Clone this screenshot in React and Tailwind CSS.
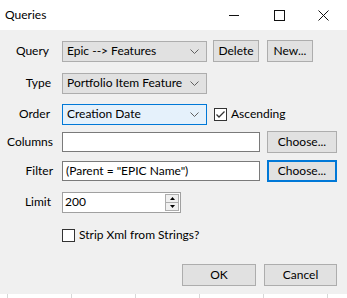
import { useState } from 'react';

const FONT = { fontFamily: 'Lato, "Noto Sans", sans-serif' };

function Chevron() {
    return (
        <svg width="9" height="5" viewBox="0 0 9 5" className="shrink-0">
            <path d="M0.5 0.5 L4.5 4.5 L8.5 0.5" fill="none" stroke="#606060" strokeWidth="1" />
        </svg>
    );
}

function Combo({ value, focused }) {
    return (
        <div
            className={`flex items-center justify-between w-[145px] h-[21px] pl-[4px] pr-[7px] border ${
                focused ? 'border-[#0078d7] bg-[#e5f1fb]' : 'border-[#adadad] bg-[#e1e1e1]'
            }`}
        >
            <span className="whitespace-nowrap">{value}</span>
            <Chevron />
        </div>
    );
}

function Btn({ children, className = '', focused }) {
    return (
        <div
            className={`flex items-center justify-center h-[22px] bg-[#e1e1e1] ${
                focused ? 'border-2 border-[#0078d7]' : 'border border-[#adadad]'
            } ${className}`}
        >
            {children}
        </div>
    );
}

function Label({ children, className = '' }) {
    return <div className={`w-[53px] text-right shrink-0 whitespace-nowrap ${className}`}>{children}</div>;
}

function Check({ checked }) {
    return (
        <div className="w-[13px] h-[13px] border border-[#333333] bg-white flex items-center justify-center shrink-0">
            {checked && (
                <svg width="11" height="11" viewBox="0 0 11 11">
                    <path d="M1.5 5.5 L4 8 L9.5 2.5" fill="none" stroke="#333333" strokeWidth="1.3" />
                </svg>
            )}
        </div>
    );
}

export default function App() {
    const [ascending] = useState(true);

    return (
        <div className="w-[347px] h-[298px] bg-[#f0f0f0] text-[12px] text-black flex flex-col overflow-hidden" style={FONT}>
            {/* title bar */}
            <div className="h-[30px] bg-white flex items-center shrink-0">
                <span className="pl-[5px] flex-1">Queries</span>
                <svg width="10" height="10" viewBox="0 0 10 10" className="mr-[35px]">
                    <path d="M0 5.5 H10" stroke="#111" strokeWidth="1" />
                </svg>
                <svg width="11" height="11" viewBox="0 0 11 11" className="mr-[33px]">
                    <rect x="0.5" y="0.5" width="10" height="10" fill="none" stroke="#111" strokeWidth="1" />
                </svg>
                <svg width="11" height="11" viewBox="0 0 11 11" className="mr-[18px]">
                    <path d="M0.5 0.5 L10.5 10.5 M10.5 0.5 L0.5 10.5" stroke="#111" strokeWidth="1" />
                </svg>
            </div>

            <div className="flex flex-col">
                <div className="flex items-center h-[22px] mt-[10px]">
                    <Label className="pr-[4px]">Query</Label>
                    <div className="ml-[9px]"><Combo value="Epic --> Features" /></div>
                    <Btn className="ml-[6px] w-[46px]">Delete</Btn>
                    <Btn className="ml-[8px] w-[46px]">New...</Btn>
                </div>

                <div className="flex items-center h-[22px] mt-[10px]">
                    <Label className="pr-[2px]">Type</Label>
                    <div className="ml-[9px]"><Combo value="Portfolio Item Feature" /></div>
                </div>

                <div className="flex items-center h-[22px] mt-[9px]">
                    <Label className="pr-[3px]">Order</Label>
                    <div className="ml-[9px]"><Combo value="Creation Date" focused /></div>
                    <div className="ml-[7px]"><Check checked={ascending} /></div>
                    <span className="ml-[4px]">Ascending</span>
                </div>

                <div className="flex items-center h-[22px] mt-[6px]">
                    <Label>Columns</Label>
                    <div className="ml-[9px] w-[198px] h-[20px] bg-white border border-[#7a7a7a]" />
                    <Btn className="ml-[7px] w-[70px]">Choose...</Btn>
                </div>

                <div className="flex items-center h-[22px] mt-[7px]">
                    <Label>Filter</Label>
                    <div className="ml-[9px] w-[198px] h-[20px] bg-white border border-[#7a7a7a] flex items-center pl-[3px] whitespace-nowrap">
                        (Parent = "EPIC Name")
                    </div>
                    <Btn className="ml-[7px] w-[70px]" focused>Choose...</Btn>
                </div>

                <div className="flex items-center h-[22px] mt-[9px]">
                    <Label className="pr-[2px]">Limit</Label>
                    <div className="ml-[9px] w-[119px] h-[21px] bg-white border border-[#a0a0a0] flex items-center">
                        <span className="pl-[2px] flex-1">200</span>
                        <div className="w-[14px] h-[17px] mr-[1px] flex flex-col border border-[#adadad] bg-[#f0f0f0]">
                            <div className="flex-1 flex items-center justify-center border-b border-[#adadad]">
                                <svg width="5" height="3" viewBox="0 0 5 3"><path d="M0 3 L2.5 0 L5 3 Z" fill="#000" /></svg>
                            </div>
                            <div className="flex-1 flex items-center justify-center">
                                <svg width="5" height="3" viewBox="0 0 5 3"><path d="M0 0 L2.5 3 L5 0 Z" fill="#000" /></svg>
                            </div>
                        </div>
                    </div>
                </div>

                <div className="flex items-center h-[22px] mt-[11px] pl-[62px]">
                    <Check />
                    <span className="ml-[4px]">Strip Xml from Strings?</span>
                </div>

                <div className="flex items-center justify-end h-[22px] mt-[18px] pr-[10px]">
                    <Btn className="w-[74px]">OK</Btn>
                    <Btn className="ml-[8px] w-[73px]">Cancel</Btn>
                </div>
            </div>

            <div className="mt-auto h-[4px] bg-white flex shrink-0">
                {[7, 70, 134, 198, 262, 326].map((x, i) => (
                    <div key={x} className={`w-px h-full bg-[#d8d8d8] ${i === 0 ? 'ml-[7px]' : 'ml-[63px]'}`} />
                ))}
            </div>
        </div>
    );
}
